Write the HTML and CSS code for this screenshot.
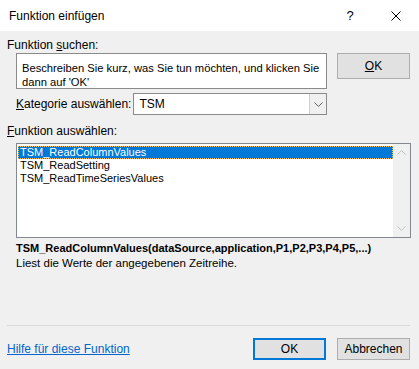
FILE: index.html
```html
<!DOCTYPE html>
<html lang="de">
<head>
    <meta charset="UTF-8">
    <title>Funktion einfügen</title>
    <link rel="stylesheet" href="styles.css">
</head>
<body>
    <div class="dialog">
        <div class="titlebar">
            <span class="title">Funktion einfügen</span>
            <span class="caption-btn help">?</span>
            <span class="caption-btn close">
                <svg width="10" height="10" viewBox="0 0 10 10"><path d="M0.5 0.5L9.5 9.5M9.5 0.5L0.5 9.5" stroke="#000" stroke-width="1"/></svg>
            </span>
        </div>

        <div class="content">
            <div class="label">Funktion <u>s</u>uchen:</div>

            <div class="search-row">
                <div class="textbox">Beschreiben Sie kurz, was Sie tun möchten, und klicken Sie<br>dann auf 'OK'</div>
                <button class="btn"><u>O</u>K</button>
            </div>

            <div class="category-row">
                <span class="label"><u>K</u>ategorie auswählen:</span>
                <div class="combo">
                    <span class="combo-value">TSM</span>
                    <span class="combo-arrow">
                        <svg width="9" height="5" viewBox="0 0 9 5"><path d="M0.5 0.5L4.5 4.5L8.5 0.5" fill="none" stroke="#606060"/></svg>
                    </span>
                </div>
            </div>

            <div class="label label-list"><u>F</u>unktion auswählen:</div>

            <div class="listbox">
                <ul class="items">
                    <li class="selected">TSM_ReadColumnValues</li>
                    <li>TSM_ReadSetting</li>
                    <li>TSM_ReadTimeSeriesValues</li>
                </ul>
                <div class="scrollbar">
                    <span class="scroll-btn">
                        <svg width="9" height="5" viewBox="0 0 9 5"><path d="M0.5 4.5L4.5 0.5L8.5 4.5" fill="none" stroke="#c0c0c0"/></svg>
                    </span>
                    <span class="scroll-btn">
                        <svg width="9" height="5" viewBox="0 0 9 5"><path d="M0.5 0.5L4.5 4.5L8.5 0.5" fill="none" stroke="#c0c0c0"/></svg>
                    </span>
                </div>
            </div>

            <div class="signature">TSM_ReadColumnValues(dataSource,application,P1,P2,P3,P4,P5,...)</div>
            <div class="description">Liest die Werte der angegebenen Zeitreihe.</div>

            <div class="separator"></div>

            <div class="footer">
                <a class="help-link" href="#">Hilfe für diese Funktion</a>
                <div class="buttons">
                    <button class="btn btn-default">OK</button>
                    <button class="btn">Abbrechen</button>
                </div>
            </div>
        </div>
    </div>
</body>
</html>
```

FILE: styles.css
```css
* {
    margin: 0;
    padding: 0;
    box-sizing: border-box;
}

body {
    font-family: "Liberation Sans", Arial, sans-serif;
    font-size: 12px;
    color: #000;
    background: #f0f0f0;
}

.dialog {
    width: 419px;
    height: 369px;
    background: #f0f0f0;
    overflow: hidden;
}

/* Titelleiste */
.titlebar {
    height: 31px;
    background: #fff;
    display: flex;
    align-items: center;
}

.title {
    flex: 1;
    padding-left: 9px;
}

.caption-btn {
    width: 46px;
    height: 31px;
    display: flex;
    align-items: center;
    justify-content: center;
}

.help {
    font-size: 13px;
}

.content {
    padding: 6px 9px 0 7px;
}

.label {
    line-height: 16px;
    white-space: nowrap;
}

/* Suche */
.search-row {
    display: flex;
    align-items: flex-start;
    gap: 10px;
    margin-left: 9px;
}

.textbox {
    width: 311px;
    height: 36px;
    background: #fff;
    border: 1px solid #8a8a8a;
    padding: 7px 5px 0;
    font-size: 11.2px;
    line-height: 14px;
    white-space: nowrap;
}

.btn {
    width: 73px;
    height: 22px;
    background: #e1e1e1;
    border: 1px solid #adadad;
    font-family: inherit;
    font-size: 12px;
    color: #000;
}

.search-row .btn {
    height: 26px;
}

.btn-default {
    border: 2px solid #0078d7;
}

/* Kategorie */
.category-row {
    width: 311px;
    height: 22px;
    margin: 4px 0 0 9px;
    display: flex;
    align-items: center;
}

.combo {
    flex: 1;
    height: 22px;
    margin-left: 2px;
    background: #fff;
    border: 1px solid #8a8a8a;
    display: flex;
    align-items: stretch;
}

.combo-value {
    flex: 1;
    padding-left: 5px;
    line-height: 20px;
}

.combo-arrow {
    width: 17px;
    background: #f0f0f0;
    border-left: 1px solid #d0d0d0;
    display: flex;
    align-items: center;
    justify-content: center;
}

.label-list {
    margin-top: 8px;
}

/* Liste */
.listbox {
    width: 395px;
    height: 95px;
    margin: 4px 0 0 9px;
    background: #fff;
    border: 1px solid #828790;
    display: flex;
}

.items {
    flex: 1;
    list-style: none;
    padding: 2px 0 0 1px;
    font-size: 11px;
}

.items li {
    line-height: 13px;
    padding-left: 2px;
}

.items li.selected {
    background: #0078d7;
    color: #fff;
    outline: 1px dotted #f5c06a;
    outline-offset: -1px;
}

.scrollbar {
    width: 17px;
    background: #f0f0f0;
    display: flex;
    flex-direction: column;
    justify-content: space-between;
}

.scroll-btn {
    height: 17px;
    display: flex;
    align-items: center;
    justify-content: center;
}

/* Beschreibung */
.signature {
    margin: 3px 0 0 9px;
    line-height: 15px;
    font-size: 11px;
    font-weight: bold;
}

.description {
    margin-left: 9px;
    line-height: 15px;
    font-size: 11.5px;
}

.separator {
    height: 1px;
    margin-top: 54px;
    background: #dadada;
}

.footer {
    margin-top: 12px;
    display: flex;
    align-items: center;
    justify-content: space-between;
}

.help-link {
    color: #0066cc;
    text-decoration: underline;
}

.buttons {
    display: flex;
    gap: 11px;
}
```
